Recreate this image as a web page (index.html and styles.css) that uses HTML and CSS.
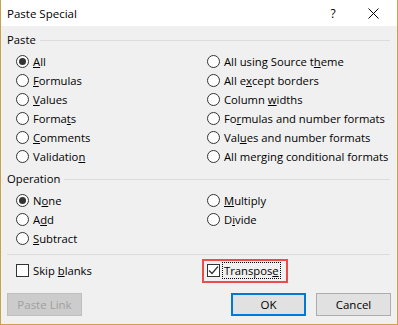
FILE: index.html
```html
<!DOCTYPE html>
<html>
<head>
<meta charset="utf-8">
<link rel="stylesheet" href="styles.css">
</head>
<body>
<div class="dialog">
  <div class="titlebar">
    <span class="title">Paste Special</span>
    <span class="help">?</span>
    <span class="close"><svg width="11" height="11" viewBox="0 0 11 11"><path d="M0.5 0.5 L10.5 10.5 M10.5 0.5 L0.5 10.5" stroke="#000" stroke-width="1" fill="none"/></svg></span>
  </div>
  <div class="body">
    <div class="group-head"><span>Paste</span><span class="line"></span></div>
    <div class="options">
      <div class="opt"><span class="radio on"></span><span><u>A</u>ll</span></div>
      <div class="opt"><span class="radio"></span><span>All using Source t<u>h</u>eme</span></div>
      <div class="opt"><span class="radio"></span><span><u>F</u>ormulas</span></div>
      <div class="opt"><span class="radio"></span><span>All e<u>x</u>cept borders</span></div>
      <div class="opt"><span class="radio"></span><span><u>V</u>alues</span></div>
      <div class="opt"><span class="radio"></span><span>Column <u>w</u>idths</span></div>
      <div class="opt"><span class="radio"></span><span>Forma<u>t</u>s</span></div>
      <div class="opt"><span class="radio"></span><span>Fo<u>r</u>mulas and number formats</span></div>
      <div class="opt"><span class="radio"></span><span><u>C</u>omments</span></div>
      <div class="opt"><span class="radio"></span><span>Val<u>u</u>es and number formats</span></div>
      <div class="opt"><span class="radio"></span><span>Validatio<u>n</u></span></div>
      <div class="opt"><span class="radio"></span><span>All mer<u>g</u>ing conditional formats</span></div>
    </div>
    <div class="group-head op"><span>Operation</span><span class="line"></span></div>
    <div class="options">
      <div class="opt"><span class="radio on"></span><span>N<u>o</u>ne</span></div>
      <div class="opt"><span class="radio"></span><span><u>M</u>ultiply</span></div>
      <div class="opt"><span class="radio"></span><span>A<u>d</u>d</span></div>
      <div class="opt"><span class="radio"></span><span>D<u>i</u>vide</span></div>
      <div class="opt"><span class="radio"></span><span><u>S</u>ubtract</span></div>
      <div class="opt"></div>
    </div>
    <div class="sep"></div>
    <div class="options checks">
      <div class="opt"><span class="check"></span><span>Skip <u>b</u>lanks</span></div>
      <div class="opt"><span class="highlight"><span class="check">
        <svg width="11" height="11" viewBox="0 0 11 11"><path d="M1 5.5 L4 8.5 L10 1.5" stroke="#333" stroke-width="1.2" fill="none"/></svg>
      </span><span class="focus">Transpos<u>e</u></span></span></div>
    </div>
    <div class="buttons">
      <button class="btn disabled">Paste Link</button>
      <span class="spacer"></span>
      <button class="btn default">OK</button>
      <button class="btn">Cancel</button>
    </div>
  </div>
</div>
</body>
</html>
```
FILE: styles.css
```css
* { box-sizing: border-box; }
html, body { margin: 0; padding: 0; }
body {
  font-family: "Open Sans", "Noto Sans", sans-serif;
  font-size: 11.25px;
  color: #000;
  background: #f0f0f0;
}
.dialog {
  width: 398px;
  height: 325px;
  border: 1px solid #c9a24b;
  border-top: none;
  background: #f0f0f0;
  display: flex;
  flex-direction: column;
}
.titlebar {
  height: 26px;
  background: #fff;
  display: flex;
  align-items: center;
  padding-left: 6px;
}
.title { flex: 1; font-size: 11.5px; }
.help { width: 16px; text-align: center; margin-right: 27px; font-size: 12px; }
.close { width: 11px; height: 11px; margin-right: 18px; display: flex; }
.body { flex: 1; display: flex; flex-direction: column; }
.group-head {
  height: 16px;
  margin-top: 6px;
  display: flex;
  align-items: center;
  gap: 4px;
  padding: 0 7px 0 6px;
  line-height: 16px;
}
.group-head.op { margin-top: 5px; }
.line { flex: 1; height: 1px; background: #dcdcdc; margin-top: 1px; }
.options {
  display: grid;
  grid-template-columns: 191px 1fr;
  padding-left: 15px;
  margin-top: 4px;
}
.opt {
  height: 19px;
  display: flex;
  align-items: center;
  gap: 4px;
  white-space: nowrap;
}
.radio {
  width: 13px;
  height: 13px;
  border: 1px solid #333;
  border-radius: 50%;
  background: #fff;
  display: flex;
  align-items: center;
  justify-content: center;
  flex: none;
}
.radio.on::after {
  content: "";
  width: 7px;
  height: 7px;
  border-radius: 50%;
  background: #333;
}
.check {
  width: 13px;
  height: 13px;
  border: 1px solid #333;
  background: #fff;
  display: flex;
  align-items: center;
  justify-content: center;
  flex: none;
}
.sep { height: 1px; background: #dcdcdc; margin: 6px 7px 0 6px; }
.checks { margin-top: 6px; }
.highlight {
  display: inline-flex;
  align-items: center;
  gap: 3px;
  width: 86px;
  height: 24px;
  margin-left: -5px;
  padding: 0 0 0 3px;
  border: 2px solid #ef4b4b;
}
.focus {
  outline: 1px dotted #000;
  outline-offset: 0;
  padding: 0 1px;
  line-height: 15px;
}
.buttons {
  display: flex;
  margin-top: 13px;
  padding: 0 6px;
  gap: 10px;
}
.spacer { flex: 1; }
.btn {
  width: 75px;
  height: 23px;
  font-family: inherit;
  font-size: 11.5px;
  background: #e1e1e1;
  border: 1px solid #adadad;
  color: #000;
  padding: 0;
}
.btn.disabled {
  background: #cccccc;
  border-color: #bfbfbf;
  color: #a0a0a0;
}
.btn.default { border: 2px solid #0078d7; }
```
